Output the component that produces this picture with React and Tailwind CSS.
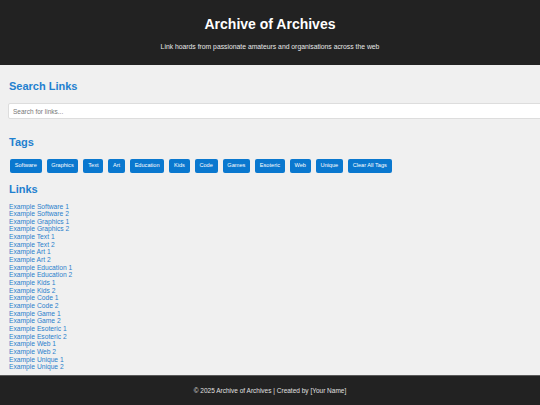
export default function App() {
  const tags = ['Software', 'Graphics', 'Text', 'Art', 'Education', 'Kids', 'Code', 'Games', 'Esoteric', 'Web', 'Unique'];
  const links = [
    'Example Software 1', 'Example Software 2', 'Example Graphics 1', 'Example Graphics 2',
    'Example Text 1', 'Example Text 2', 'Example Art 1', 'Example Art 2',
    'Example Education 1', 'Example Education 2', 'Example Kids 1', 'Example Kids 2',
    'Example Code 1', 'Example Code 2', 'Example Game 1', 'Example Game 2',
    'Example Esoteric 1', 'Example Esoteric 2', 'Example Web 1', 'Example Web 2',
    'Example Unique 1', 'Example Unique 2',
  ];

  return (
    <div className="w-[540px] h-[405px] overflow-hidden bg-[#f0f0f0] flex flex-col" style={{ fontFamily: '"Liberation Sans", Arial, sans-serif' }}>
      {/* Header */}
      <header className="bg-[#222222] h-[65px] flex flex-col items-center pt-[16px] text-white">
        <h1 className="text-[14px] leading-[17px] font-bold">Archive of Archives</h1>
        <p className="text-[6.8px] leading-[8px] mt-[10px] text-[#e8e8e8]">Link hoards from passionate amateurs and organisations across the web</p>
      </header>

      <main className="flex-1 px-[8px] pt-[15px]">
        {/* Search */}
        <h2 className="text-[11px] leading-[13px] font-bold text-[#1f80cf] ml-px">Search Links</h2>
        <input
          type="text"
          placeholder="Search for links..."
          className="mt-[10px] w-[540px] h-[16px] bg-white border border-[#dddddd] rounded-[2px] px-[4px] text-[6.5px] placeholder:text-[#777]"
        />

        {/* Tags */}
        <h2 className="mt-[15px] text-[11px] leading-[13px] font-bold text-[#1f80cf] ml-px">Tags</h2>
        <div className="mt-[10px] flex gap-[5px] pl-[2px]">
          {tags.map((t) => (
            <button key={t} className="h-[14px] px-[4.75px] bg-[#0a78cf] text-white text-[5.6px] rounded-[2px]">
              {t}
            </button>
          ))}
          <button className="h-[14px] px-[4.75px] bg-[#0a78cf] text-white text-[5.6px] rounded-[2px]">Clear All Tags</button>
        </div>

        {/* Links */}
        <h2 className="mt-[10px] text-[11px] leading-[13px] font-bold text-[#1f80cf] ml-px">Links</h2>
        <ul className="mt-[7px] ml-px">
          {links.map((l) => (
            <li key={l} className="text-[6.7px] leading-[7.65px] text-[#2a7fcc]">
              <a href="#">{l}</a>
            </li>
          ))}
        </ul>
      </main>

      {/* Footer */}
      <footer className="h-[30px] bg-[#222222] border-t border-[#5a5a5a] flex items-center justify-center">
        <p className="text-[6.5px] text-[#e0e0e0]">© 2025 Archive of Archives | Created by [Your Name]</p>
      </footer>
    </div>
  );
}
